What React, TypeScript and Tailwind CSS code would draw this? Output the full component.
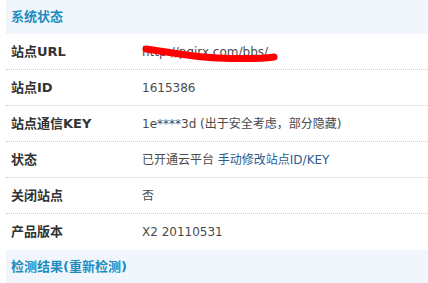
import React from 'react'

const rows: { label: string; value: React.ReactNode }[] = [
  {
    label: '站点URL',
    value: (
      <span className="relative inline-block">
        http://pqirx.com/bbs/
        {/* hand-drawn red scribble over the url */}
        <svg className="absolute left-0 top-0 overflow-visible" width="136" height="18" viewBox="0 0 136 18">
          <path
            d="M4 6 C 25 9, 50 14, 75 15 C 100 16, 118 16, 132 14"
            stroke="#ff0000"
            strokeWidth="7"
            strokeLinecap="round"
            fill="none"
          />
        </svg>
      </span>
    ),
  },
  { label: '站点ID', value: '1615386' },
  { label: '站点通信KEY', value: '1e****3d (出于安全考虑，部分隐藏)' },
  {
    label: '状态',
    value: (
      <>
        已开通云平台 <a className="text-[#2b5c8f]">手动修改站点ID/KEY</a>
      </>
    ),
  },
  { label: '关闭站点', value: '否' },
  { label: '产品版本', value: 'X2 20110531' },
]

export default function App() {
  return (
    <div
      className="w-[428px] h-[283px] overflow-hidden bg-white pl-[6px]"
      style={{ fontFamily: '"DejaVu Sans", "Noto Sans CJK SC", sans-serif' }}
    >
      {/* section header */}
      <div className="h-[34px] flex items-center pl-[5px] bg-[#f0f6fc] text-[13px] font-bold text-[#1e8cc0]">
        系统状态
      </div>

      {rows.map((row, i) => (
        <div
          key={row.label}
          className={`h-[36px] flex items-center ${
            i < rows.length - 1 ? 'border-b border-dotted border-[#cfcfcf]' : ''
          }`}
        >
          <div className="w-[136px] pl-[5px] text-[13px] font-bold text-[#333333]">{row.label}</div>
          <div className="text-[12px] leading-[18px] text-[#4a4a4a]">{row.value}</div>
        </div>
      ))}

      <div className="h-[34px] flex items-center pl-[5px] bg-[#f0f6fc] text-[13px] font-bold text-[#1e8cc0]">
        检测结果(重新检测)
      </div>
    </div>
  )
}
